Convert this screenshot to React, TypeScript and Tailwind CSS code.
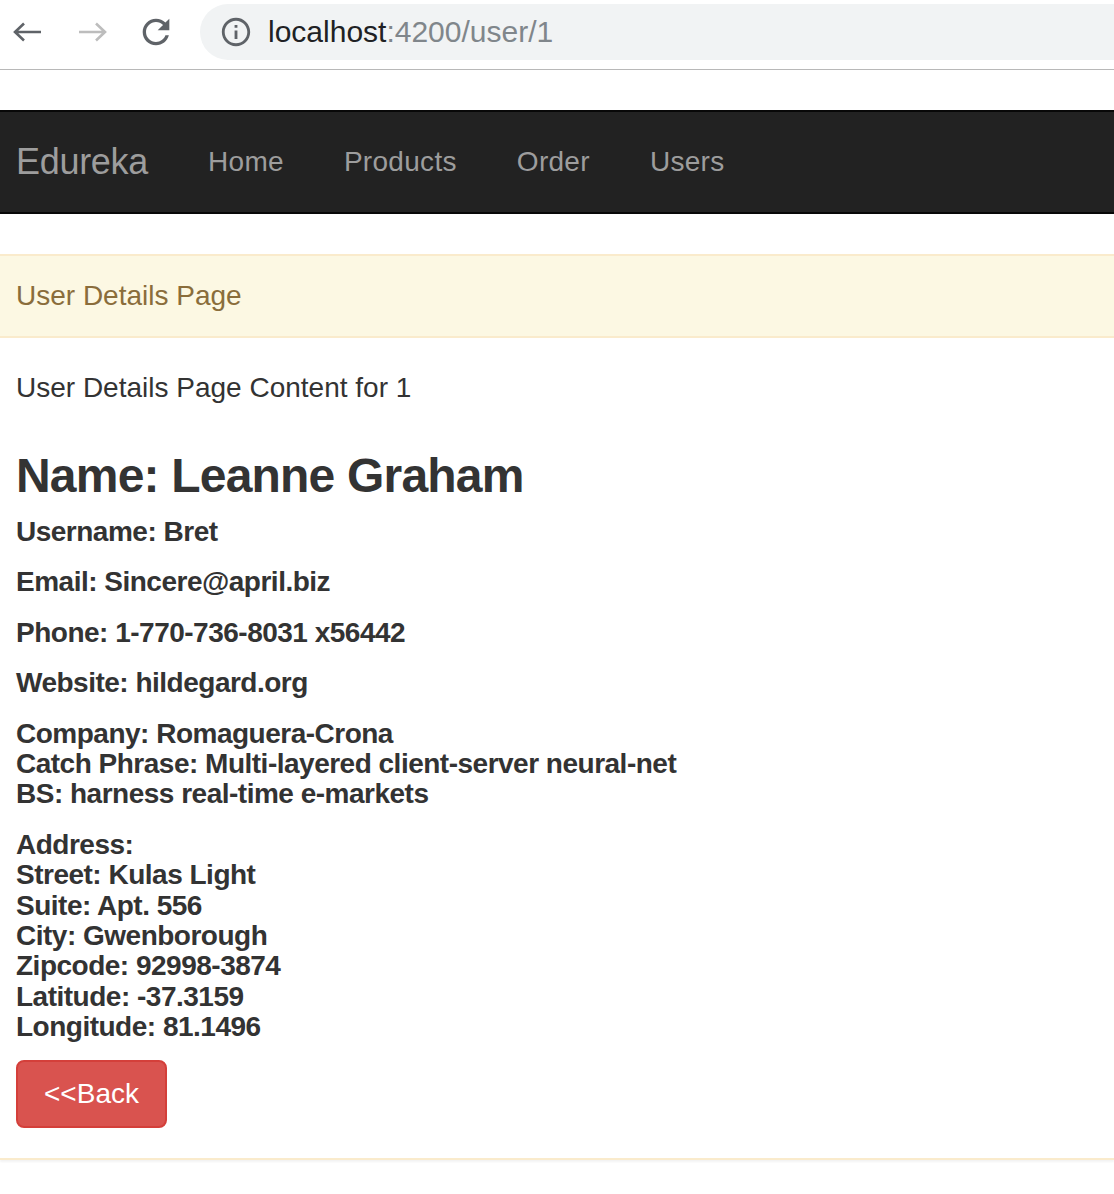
import React from "react";

export default function App() {
  const lines1 = [
    "Username: Bret",
    "Email: Sincere@april.biz",
    "Phone: 1-770-736-8031 x56442",
    "Website: hildegard.org",
  ];
  return (
    <div className="w-[1114px] h-[1194px] overflow-hidden bg-white font-['Liberation_Sans',Arial,sans-serif]">
      {/* Browser chrome */}
      <div className="h-[70px] border-b border-[#b8b8b8] pt-[4px]">
        <div className="flex h-[56px] items-center">
          <div className="flex w-[200px] items-center">
            <svg width="30" height="20" viewBox="0 0 30 20" className="ml-[13px]">
              <path d="M2 10 H28 M11 1.5 L2 10 L11 18.5" fill="none" stroke="#5f6368" strokeWidth="2.6" strokeLinecap="butt" strokeLinejoin="miter" />
            </svg>
            <svg width="30" height="20" viewBox="0 0 30 20" className="ml-[34px]">
              <path d="M2 10 H28 M19 1.5 L28 10 L19 18.5" fill="none" stroke="#bdbdbd" strokeWidth="2.6" />
            </svg>
            <svg width="40" height="40" viewBox="0 0 24 24" className="ml-[29px]">
              <path
                fill="#5f6368"
                d="M17.65 6.35C16.2 4.9 14.21 4 12 4c-4.42 0-7.990 3.58-7.99 8s3.57 8 7.99 8c3.73 0 6.84-2.55 7.73-6h-2.08c-.82 2.33-3.04 4-5.65 4-3.31 0-6-2.69-6-6s2.69-6 6-6c1.66 0 3.14.69 4.22 1.78L13 11h7V4l-2.35 2.35z"
              />
            </svg>
          </div>
          <div className="flex h-[56px] flex-1 items-center rounded-l-full bg-[#f1f3f4]">
            <svg width="34" height="34" viewBox="0 0 24 24" className="ml-[19px]">
              <path
                fill="#5f6368"
                d="M11 7h2v2h-2zm0 4h2v6h-2zm1-9C6.48 2 2 6.48 2 12s4.480 10 10 10 10-4.48 10-10S17.52 2 12 2zm0 18c-4.41 0-8-3.590-8-8s3.59-8 8-8 8 3.59 8 8-3.59 8-8 8z"
              />
            </svg>
            <span className="ml-[15px] text-[30px] leading-none text-[#202124]">
              localhost<span className="text-[#80868b]">:4200/user/1</span>
            </span>
          </div>
        </div>
      </div>

      {/* Navbar */}
      <nav className="mt-[40px] flex h-[104px] items-center border-y-2 border-[#080808] bg-[#222222] pl-[16px]">
        <span className="text-[36px] leading-none tracking-[-0.3px] text-[#9d9d9d]">Edureka</span>
        <ul className="ml-[30px] flex items-center">
          {["Home", "Products", "Order", "Users"].map((l) => (
            <li key={l} className="px-[30px] text-[28px] leading-none tracking-[0.3px] text-[#9d9d9d]">
              {l}
            </li>
          ))}
        </ul>
      </nav>

      {/* Panel */}
      <div className="mt-[40px] border-y-2 border-[#faebcc] shadow-[0_2px_2px_rgba(0,0,0,0.05)]">
        <div className="border-b-2 border-[#faebcc] bg-[#fcf8e3] px-[16px] py-[20px] text-[28px] leading-[40px] text-[#8a6d3b]">
          User Details Page
        </div>
        <div className="px-[16px] pt-[30px] pb-[30px] text-[#333333]">
          <p className="text-[28px] leading-[40px]">User Details Page Content for 1</p>
          <h3 className="mt-[41px] text-[48px] font-bold leading-[53px] tracking-[-0.8px]">Name: Leanne Graham</h3>
          <div className="mt-[15px] flex flex-col gap-[20px] text-[28px] font-bold leading-[30.4px] tracking-[-0.5px]">
            {lines1.map((l) => (
              <h5 key={l}>{l}</h5>
            ))}
            <h5>
              Company: Romaguera-Crona
              <br />
              Catch Phrase: Multi-layered client-server neural-net
              <br />
              BS: harness real-time e-markets
            </h5>
            <h5>
              Address:
              <br />
              Street: Kulas Light
              <br />
              Suite: Apt. 556
              <br />
              City: Gwenborough
              <br />
              Zipcode: 92998-3874
              <br />
              Latitude: -37.3159
              <br />
              Longitude: 81.1496
            </h5>
          </div>
          <button className="mt-[17px] rounded-[8px] border-2 border-[#d43f3a] bg-[#d9534f] px-[26px] py-[12px] text-[28px] leading-[40px] text-white">
            &lt;&lt;Back
          </button>
        </div>
      </div>
    </div>
  );
}
